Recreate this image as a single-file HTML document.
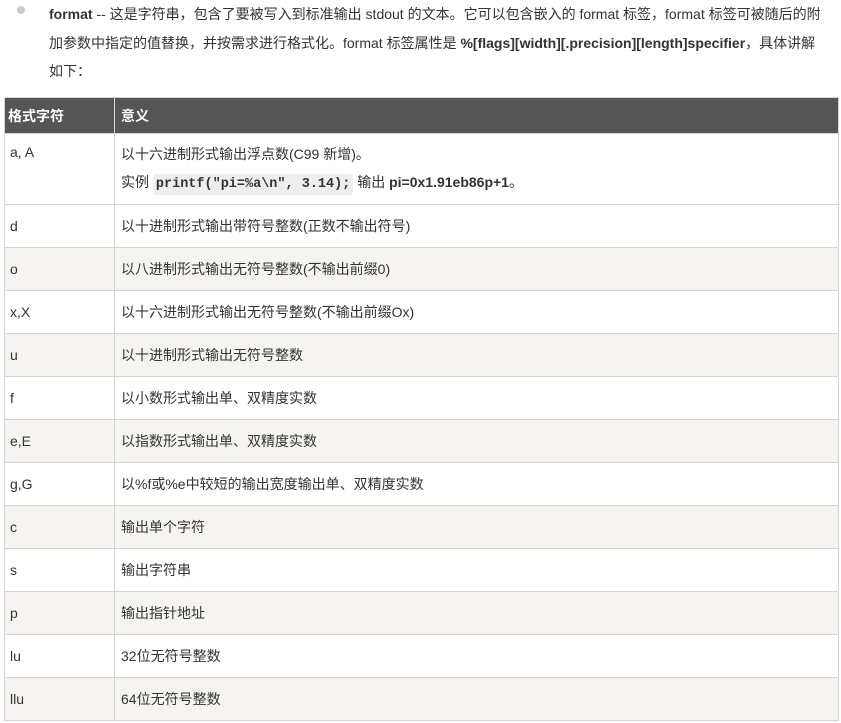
<!DOCTYPE html>
<html><head><meta charset="utf-8"><style>
body{margin:0;background:#fff;font-family:"Liberation Sans","Noto Sans CJK SC",sans-serif;font-size:14px;color:#333;width:841px;height:723px;overflow:hidden;position:relative}
.p{position:absolute;left:49px;top:0;width:790px;line-height:28.5px;white-space:nowrap}
.dot{position:absolute;left:17px;top:6px;width:8px;height:8px;border-radius:50%;background:#ccc}
table{position:absolute;left:4px;top:97px;width:835px;border-collapse:collapse}
td,th{border:1px solid #d4d4d4;padding:0 6px;text-align:left;vertical-align:middle;height:42px}
th{background:#555;color:#fff;font-weight:bold;height:35px;padding:0 3px}
th+th{padding-left:6px}
td:first-child{width:96px;padding-left:5px}
tr:nth-child(even) td{background:#f6f4f0}
tr.w td{background:#fff}
code{font-family:"Liberation Mono",monospace;font-weight:bold;background:#eee;padding:3px 3px;border-radius:3px;font-size:13.5px}
</style></head><body>
<div class="dot"></div>
<div class="p"><b>format</b> -- 这是字符串，包含了要被写入到标准输出 stdout 的文本。它可以包含嵌入的 format 标签，format 标签可被随后的附<br>加参数中指定的值替换，并按需求进行格式化。format 标签属性是 <b>%[flags][width][.precision][length]specifier</b>，具体讲解<br>如下：</div>
<table>
<tr><th style="width:103px">格式字符</th><th>意义</th></tr>
<tr class="w"><td style="height:71px;vertical-align:top;padding-top:10px;box-sizing:border-box">a, A</td><td style="line-height:28px">以十六进制形式输出浮点数(C99 新增)。<br>实例 <code>printf("pi=%a\n", 3.14);</code> 输出 <b>pi=0x1.91eb86p+1</b>。</td></tr>
<tr><td>d</td><td>以十进制形式输出带符号整数(正数不输出符号)</td></tr>
<tr><td>o</td><td>以八进制形式输出无符号整数(不输出前缀0)</td></tr>
<tr><td>x,X</td><td>以十六进制形式输出无符号整数(不输出前缀Ox)</td></tr>
<tr><td>u</td><td>以十进制形式输出无符号整数</td></tr>
<tr><td>f</td><td>以小数形式输出单、双精度实数</td></tr>
<tr><td>e,E</td><td>以指数形式输出单、双精度实数</td></tr>
<tr><td>g,G</td><td>以%f或%e中较短的输出宽度输出单、双精度实数</td></tr>
<tr><td>c</td><td>输出单个字符</td></tr>
<tr><td>s</td><td>输出字符串</td></tr>
<tr><td>p</td><td>输出指针地址</td></tr>
<tr><td>lu</td><td>32位无符号整数</td></tr>
<tr><td>llu</td><td>64位无符号整数</td></tr>
</table>
</body></html>
